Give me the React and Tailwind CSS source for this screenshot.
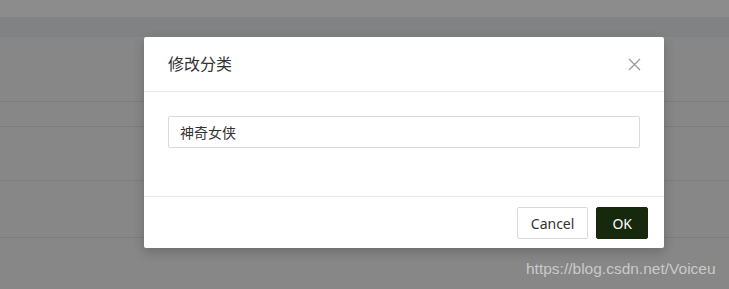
import React from "react";

const font = { fontFamily: '"Noto Sans", "Noto Sans CJK SC", sans-serif' };

export default function App() {
  return (
    <div
      className="relative w-[729px] h-[289px] overflow-hidden bg-[#878787]"
      style={font}
    >
      {/* page behind the mask */}
      <div className="flex flex-col">
        <div className="h-[17px] bg-[#8c8c8c]" />
        <div className="h-[20px] bg-[#818284]" />
        <div className="h-[65px] border-b border-[#7d7d7d]" />
        <div className="h-[25px] border-b border-[#7d7d7d]" />
        <div className="h-[54px] border-b border-[#7d7d7d]" />
        <div className="h-[57px] border-b border-[#7d7d7d]" />
      </div>

      {/* modal */}
      <div className="absolute left-[144px] top-[37px] w-[520px] bg-white rounded-[2px] shadow-[0_4px_12px_rgba(0,0,0,0.2)]">
        <div className="flex items-center justify-between h-[55px] px-6 border-b border-[#e8e8e8]">
          <span className="text-[16px] text-[#333] leading-none">修改分类</span>
          <button className="text-[#999] mr-[-1px]">
            <svg width="13" height="13" viewBox="0 0 13 13" fill="none">
              <path d="M1 1L12 12M12 1L1 12" stroke="#999" strokeWidth="1.2" />
            </svg>
          </button>
        </div>
        <div className="px-6 pt-6 pb-12">
          <input
            type="text"
            defaultValue="神奇女侠"
            className="w-full h-[32px] px-[11px] text-[14px] text-[#333] border border-[#d9d9d9] rounded-[2px] outline-none"
            style={font}
          />
        </div>
        <div className="flex justify-end gap-2 px-4 pt-[10px] pb-[9px] border-t border-[#e8e8e8]">
          <button
            className="h-[32px] px-[13px] text-[14px] text-[#333] bg-white border border-[#d9d9d9] rounded-[2px]"
            style={font}
          >
            Cancel
          </button>
          <button
            className="h-[32px] px-[15px] text-[14px] text-white bg-[#17290d] border border-[#17290d] rounded-[2px]"
            style={font}
          >
            OK
          </button>
        </div>
      </div>

      <div
        className="absolute left-[526px] top-[257px] text-[15.5px] text-[#dcdcdc]/80"
        style={{ fontFamily: '"Liberation Sans", Arial, sans-serif' }}
      >
        https://blog.csdn.net/Voiceu
      </div>
    </div>
  );
}
